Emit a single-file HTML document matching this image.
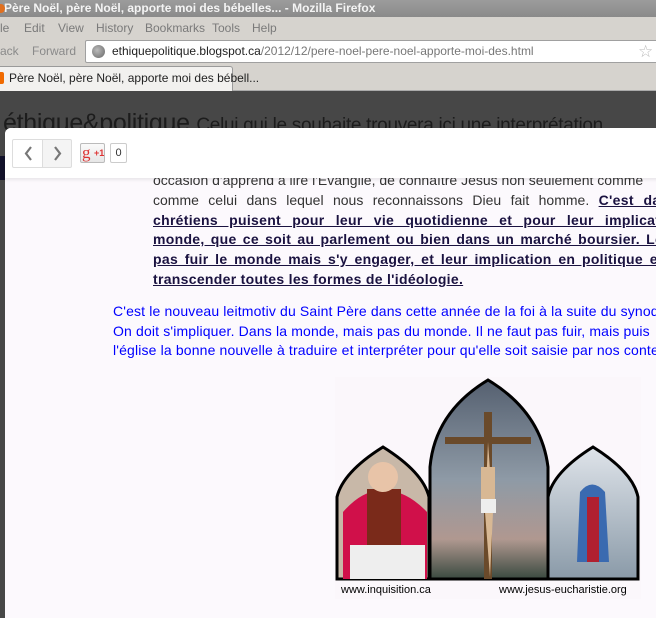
<!DOCTYPE html>
<html><head><meta charset="utf-8"><style>
*{margin:0;padding:0;box-sizing:border-box}
body{width:656px;height:607px;overflow:hidden;position:relative;background:#474747;font-family:"Liberation Sans",Arial,sans-serif}
.abs{position:absolute;white-space:nowrap}
#title{left:0;top:0;width:656px;height:17px;background:linear-gradient(#9c9c9c,#8a8a8a);color:#f4f4f4;font-weight:bold;font-size:12px;line-height:17px;padding-left:4px}
#menu{left:0;top:17px;width:656px;height:22px;background:#d6d3ce;color:#7a7a7a;font-size:12px;line-height:22px}
#menu span{position:absolute}
#nav{left:0;top:39px;width:656px;height:25px;background:#d6d3ce;color:#8a8a8a;font-size:12px;line-height:25px}
#url{left:85px;top:40px;width:580px;height:23px;background:#fff;border:1px solid #a0a0a0;border-radius:2px;font-size:12px;line-height:21px;padding-left:26px;color:#222}
#tabs{left:0;top:64px;width:656px;height:27px;background:#d6d3ce;border-bottom:1px solid #aaa}
#tab{left:-4px;top:66px;width:237px;height:25px;background:#f2f1ef;border:1px solid #9a9a9a;border-bottom:none;border-radius:3px 3px 0 0;font-size:12px;line-height:23px;padding-left:12px;color:#222}
#head{left:3px;top:109px;font-size:25px;color:#1c1c1c;letter-spacing:-0.3px}
#head small{font-size:19px}
#panel{left:5px;top:128px;width:660px;height:490px;background:#fcf9fd;border-radius:6px 0 0 0}
#bar{left:5px;top:128px;width:660px;height:50px;background:#fff;border-radius:6px 0 0 0;box-shadow:0 2px 3px rgba(0,0,0,.08)}
.line{position:absolute;left:153px;white-space:nowrap;font-size:14px;color:#333}
.b{font-weight:bold;text-decoration:underline;color:#1a1240;letter-spacing:0.3px}
.blue{color:#0000ff;font-size:14px;line-height:19.6px}
</style></head><body>
<div class="abs" id="title">Père Noël, père Noël, apporte moi des bébelles... - Mozilla Firefox</div>
<div class="abs" style="left:-3px;top:4px;width:8px;height:9px;border-radius:50%;background:#e07020"></div>
<div class="abs" id="menu"><span style="left:0">le</span><span style="left:24px">Edit</span><span style="left:58px">View</span><span style="left:96px">History</span><span style="left:145px">Bookmarks</span><span style="left:212px">Tools</span><span style="left:252px">Help</span></div>
<div class="abs" id="nav"><span class="abs" style="left:0">ack</span><span class="abs" style="left:32px">Forward</span></div>
<div class="abs" id="url">ethiquepolitique.blogspot.ca<span style="color:#777">/2012/12/pere-noel-pere-noel-apporte-moi-des.html</span></div>
<div class="abs" style="left:92px;top:45px;width:13px;height:13px;border-radius:50%;background:radial-gradient(circle at 40% 40%,#bbb,#666)"></div>
<div class="abs" style="left:638px;top:42px;color:#bbb;font-size:17px">☆</div>
<div class="abs" id="tabs"></div>
<div class="abs" id="tab">Père Noël, père Noël, apporte moi des bébell...</div>
<div class="abs" style="left:-4px;top:72px;width:8px;height:12px;background:#f06a00;border-radius:2px"></div>
<div class="abs" id="head">éthique&amp;politique <small>Celui qui le souhaite trouvera ici une interprétation</small></div>
<div class="abs" style="left:0;top:156px;width:6px;height:24px;background:#12122a"></div>
<div class="abs" id="panel"></div>
<div class="abs" id="bar"></div>
<div class="abs" style="left:12px;top:139px;width:31px;height:29px;border:1px solid #ddd;border-radius:2px 0 0 2px;background:#fff"></div>
<div class="abs" style="left:42px;top:139px;width:30px;height:29px;border:1px solid #ddd;border-radius:0 2px 2px 0;background:#f4f4f4"></div>
<svg class="abs" style="left:12px;top:139px" width="60" height="29"><path d="M19 8 L14 14.5 L19 21" fill="none" stroke="#777" stroke-width="2.2"/><path d="M43 8 L48 14.5 L43 21" fill="none" stroke="#777" stroke-width="2.2"/></svg>
<div class="abs" style="left:80px;top:143px;width:25px;height:20px;border:1px solid #bbb;border-radius:2px;background:linear-gradient(#fafafa,#e6e6e6);font-size:11px;line-height:18px;color:#d33;font-weight:bold"><span style="font-family:'Liberation Serif',serif;font-size:17px;font-weight:normal;margin-left:1px">g</span><span style="position:absolute;left:13px;top:0;font-size:9px">+1</span></div>
<div class="abs" style="left:110px;top:143px;width:17px;height:20px;border:1px solid #ccc;border-radius:2px;background:#fff;font-size:11px;line-height:18px;text-align:center;color:#333">0</div>
<div class="abs" style="left:150px;top:178px;width:510px;height:20px;overflow:hidden"><div class="line" style="left:3px;top:-6px">occasion d'apprend à lire l'Evangile, de connaître Jésus non seulement comme</div></div>
<div class="line" style="top:192px;word-spacing:5.5px">comme celui dans lequel nous reconnaissons Dieu fait homme. <span class="b">C'est da</span></div>
<div class="line b" style="top:212px;word-spacing:7px">chrétiens puisent pour leur vie quotidienne et pour leur implicatio</div>
<div class="line b" style="top:231px;word-spacing:2px">monde, que ce soit au parlement ou bien dans un marché boursier. Le</div>
<div class="line b" style="top:251px;word-spacing:2.5px">pas fuir le monde mais s'y engager, et leur implication en politique et</div>
<div class="line b" style="top:271px">transcender toutes les formes de l'idéologie.</div>
<div class="abs blue" style="left:113px;top:302px;letter-spacing:0.15px">C'est le nouveau leitmotiv du Saint Père dans cette année de la foi à la suite du synod<br>On doit s'impliquer. Dans la monde, mais pas du monde. Il ne faut pas fuir, mais puis<br>l'église la bonne nouvelle à traduire et interpréter pour qu'elle soit saisie par nos conte</div>
<svg class="abs" style="left:335px;top:377px" width="306" height="222" viewBox="0 0 306 222">
<rect width="306" height="222" fill="#fbf7fb"/>
<defs><linearGradient id="sky" x1="0" y1="0" x2="0" y2="1"><stop offset="0" stop-color="#556070"/><stop offset=".5" stop-color="#8e9aa6"/><stop offset=".8" stop-color="#b09890"/><stop offset="1" stop-color="#3a4a40"/></linearGradient>
<linearGradient id="mary" x1="0" y1="0" x2="0" y2="1"><stop offset="0" stop-color="#dfe4ea"/><stop offset="1" stop-color="#8a9aa8"/></linearGradient></defs>
<path d="M2 202 V120 Q8 95 48 70 Q88 95 94 120 V202Z" fill="#c8b8a8" stroke="#000" stroke-width="3"/>
<path d="M8 202 V135 Q28 112 48 114 Q70 112 92 135 V202Z" fill="#d0104a"/>
<rect x="32" y="112" width="34" height="90" fill="#7a2a1a"/>
<rect x="15" y="168" width="75" height="34" fill="#eee"/>
<circle cx="48" cy="100" r="15" fill="#e8c4a8"/>
<path d="M95 202 V90 Q100 35 153 3 Q206 35 213 90 V202Z" fill="url(#sky)" stroke="#000" stroke-width="3"/>
<rect x="149" y="35" width="8" height="167" fill="#6a4a2a"/>
<rect x="110" y="60" width="86" height="7" fill="#6a4a2a"/>
<path d="M153 65 L150 135 L155 200 L158 135Z" fill="#d8b894"/>
<rect x="146" y="90" width="14" height="40" fill="#d8b894"/>
<rect x="146" y="122" width="15" height="14" fill="#eee"/>
<path d="M213 202 V120 Q218 95 258 70 Q298 95 303 120 V202Z" fill="url(#mary)" stroke="#000" stroke-width="3"/>
<path d="M245 115 Q257 100 270 115 L274 185 L242 185Z" fill="#3a6ab0"/>
<rect x="252" y="120" width="12" height="65" fill="#b02030"/>
<text x="6" y="216" font-family="Liberation Sans,Arial,sans-serif" font-size="11" fill="#000">www.inquisition.ca</text>
<text x="164" y="216" font-family="Liberation Sans,Arial,sans-serif" font-size="11" fill="#000">www.jesus-eucharistie.org</text>
</svg>
</body></html>
